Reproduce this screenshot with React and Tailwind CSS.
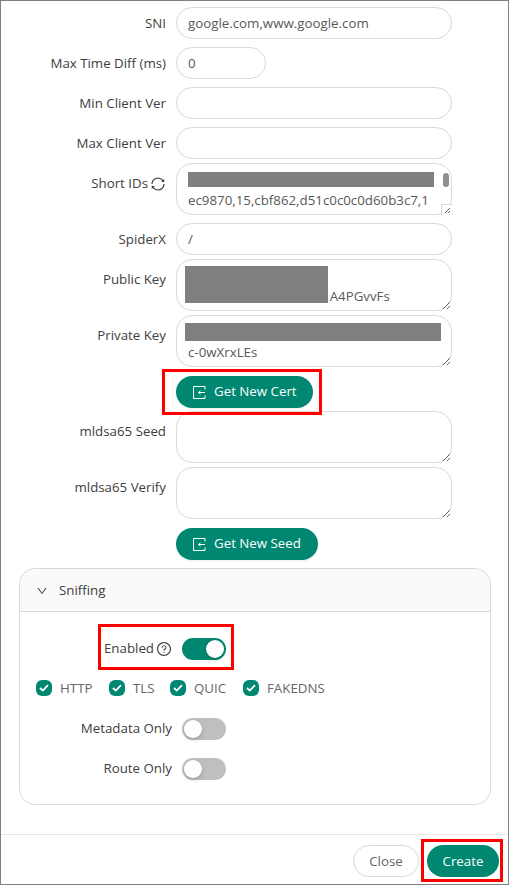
import { useState } from 'react';
import { AiOutlineDown, AiOutlineQuestionCircle, AiOutlineSync } from 'react-icons/ai';

function Label({ children, className = '' }) {
  return (
    <div className={`w-[165px] h-8 shrink-0 pt-[2px] flex items-center justify-end gap-[2px] text-[13.3px] text-[#404040] ${className}`}>
      {children}
    </div>
  );
}

function InputRow({ label, value = '', className = '', inputClass = 'w-[276px]' }) {
  return (
    <div className={`flex gap-[10px] ${className}`}>
      <Label>{label}</Label>
      <input
        defaultValue={value}
        className={`h-8 rounded-full border border-[#d9d9d9] bg-white px-[11px] text-[13.3px] text-[#595959] outline-none ${inputClass}`}
      />
    </div>
  );
}

function AreaRow({ label, value = '', className = '', children }) {
  return (
    <div className={`flex gap-[10px] ${className}`}>
      <Label className="mt-1">{label}</Label>
      <div className="relative w-[276px] h-[52px]">
        <textarea
          defaultValue={value}
          className="block w-full h-full overflow-hidden rounded-2xl border border-[#d9d9d9] bg-white px-[11px] py-[3px] text-[13.3px] leading-[22px] text-[#595959] outline-none"
        />
        {children}
      </div>
    </div>
  );
}

function Redacted({ className }) {
  return <div className={`absolute bg-[#808080] ${className}`} />;
}

function GreenButton({ children, className = '' }) {
  return (
    <button className={`h-8 flex items-center gap-[8px] rounded-full bg-[#008771] pl-[17px] text-[13.3px] text-white shadow-[0_2px_0_rgba(0,0,0,0.04)] ${className}`}>
      <svg width="13" height="13" viewBox="0 0 13 13" fill="none" stroke="white" strokeWidth="1">
        <path d="M12 3.5V.5H.5v12H12V9.5" />
        <path d="M12 6.5H5.5M7.5 4.8L5.5 6.5l2 1.7" />
      </svg>
      {children}
    </button>
  );
}

function Toggle({ defaultOn = false }) {
  const [on, setOn] = useState(defaultOn);
  return (
    <button
      onClick={() => setOn(!on)}
      className={`w-11 h-[22px] rounded-full flex items-center p-[2px] ${on ? 'bg-[#008771] justify-end' : 'bg-[#bfbfbf] justify-start'}`}
    >
      <span className="w-[18px] h-[18px] rounded-full bg-white shadow-[0_2px_4px_rgba(0,35,11,0.2)]" />
    </button>
  );
}

function Check({ label, className = '' }) {
  return (
    <label className={`h-4 flex items-center gap-2 text-[13.3px] text-[#666666] ${className}`}>
      <span className="w-4 h-4 rounded-[6px] bg-[#008771] flex items-center justify-center">
        <svg width="10" height="8" viewBox="0 0 10 8" fill="none">
          <path d="M1 4l2.8 2.6L9 1.2" stroke="white" strokeWidth="1.8" />
        </svg>
      </span>
      <span className="pt-[2px]">{label}</span>
    </label>
  );
}

function SwitchRow({ label, on, className = '', children }) {
  return (
    <div className={`h-[22px] flex items-center gap-[10px] ${className}`}>
      <div className="w-[152px] flex items-center justify-end gap-[2px] text-[13.3px] text-[#404040]">
        {label}
        {children}
      </div>
      <Toggle defaultOn={on} />
    </div>
  );
}

const publicKeyValue = '\n' + ' '.repeat(41) + 'A4PGvvFs';

export default function App() {
  return (
    <div className="relative w-[509px] h-[885px] overflow-hidden border border-[#808080] bg-white font-['Open_Sans',sans-serif]">
      <div className="h-[833px] pt-[6px]">
        <InputRow label="SNI" value="google.com,www.google.com" />
        <InputRow label="Max Time Diff (ms)" value="0" className="mt-2" inputClass="w-[90px]" />
        <InputRow label="Min Client Ver" className="mt-2" />
        <InputRow label="Max Client Ver" className="mt-2" />
        <AreaRow label={<>Short IDs <AiOutlineSync className="text-[16px]" /></>} value={'\nec9870,15,cbf862,d51c0c0c0d60b3c7,1'} className="mt-[4px]">
          <Redacted className="left-3 top-[9px] w-[246px] h-[15px]" />
          <div className="absolute right-[3px] top-[10px] w-[6px] h-[14px] rounded-full bg-[#8f8f8f]" />
          <div className="absolute right-0 bottom-0 w-[11px] h-[11px] border-l border-t border-[#d9d9d9] bg-white">
            <svg className="absolute right-[2px] bottom-[2px]" width="5" height="5" viewBox="0 0 5 5" stroke="#666666" strokeWidth="1">
              <path d="M0 5L5 0M3 5L5 3" />
            </svg>
          </div>
        </AreaRow>
        <InputRow label="SpiderX" value="/" className="mt-[8px]" />
        <AreaRow label="Public Key" value={publicKeyValue} className="mt-[4px]">
          <Redacted className="left-[9px] top-[7px] w-[143px] h-[37px]" />
        </AreaRow>
        <AreaRow label="Private Key" value={'\nc-0wXrxLEs'} className="mt-[4px]">
          <Redacted className="left-[9px] top-[8px] w-[256px] h-[18px]" />
        </AreaRow>
        <div className="mt-[9px] ml-[175px]">
          <GreenButton className="w-[137px]">Get New Cert</GreenButton>
        </div>
        <AreaRow label="mldsa65 Seed" className="mt-[3px]" />
        <AreaRow label="mldsa65 Verify" className="mt-[4px]" />
        <div className="mt-[9px] ml-[175px]">
          <GreenButton className="w-[142px]">Get New Seed</GreenButton>
        </div>
        <section className="mt-2 ml-[18px] mr-[17px] h-[237px] rounded-2xl border border-[#d9d9d9]">
          <div className="h-[43px] pt-[2px] flex items-center gap-[11px] rounded-t-2xl border-b border-[#d9d9d9] bg-[#fafafa] pl-4 text-[13.3px] text-[#404040]">
            <AiOutlineDown className="text-[12px]" />
            Sniffing
          </div>
          <SwitchRow label="Enabled" on className="mt-[26px]">
            <AiOutlineQuestionCircle className="text-[16px]" />
          </SwitchRow>
          <div className="mt-[20px] ml-4 flex">
            <Check label="HTTP" className="w-[73px]" />
            <Check label="TLS" className="w-[61px]" />
            <Check label="QUIC" className="w-[73px]" />
            <Check label="FAKEDNS" />
          </div>
          <SwitchRow label="Metadata Only" className="mt-[22px]" />
          <SwitchRow label="Route Only" className="mt-[18px]" />
        </section>
      </div>
      <footer className="h-[50px] border-t border-[#e5e5e5] flex justify-end items-start gap-2 pt-[10px] pr-[9px]">
        <button className="w-[66px] h-8 pt-[2px] rounded-full border border-[#d9d9d9] bg-white text-[13.3px] text-[#666666]">Close</button>
        <button className="w-[72px] h-8 pt-[2px] rounded-full bg-[#008771] text-[13.3px] text-white">Create</button>
      </footer>
      <div className="absolute left-[161px] top-[368px] w-[160px] h-[46px] border-[3px] border-[#ff0000]" />
      <div className="absolute left-[97px] top-[623px] w-[136px] h-[46px] border-[3px] border-[#ff0000]" />
      <div className="absolute left-[420px] top-[838px] w-[82px] h-[43px] border-[3px] border-[#ff0000]" />
    </div>
  );
}
